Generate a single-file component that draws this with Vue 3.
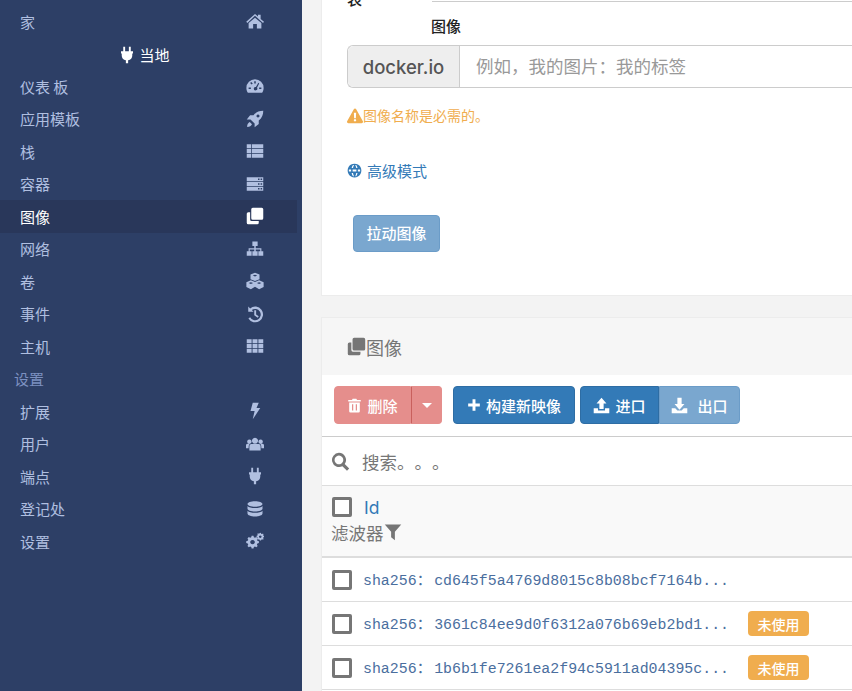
<script setup>
const icons = {
  home: 'M12 2.500l4 3.500V3.500h3.500v5.700l4.500 3.800-1.300 1.500L12 5.100 1.800 14.500.3 13zM12 7.500l8.500 7V22H14.500v-6h-5v6H3.500v-7.500z',
  gauge: 'M12 3A11.500 11.500 0 0 0 .5 14.500c0 2.500.7 4.500 2 6.500h19c1.300-2 2-4 2-6.500A11.500 11.500 0 0 0 12 3zM16.500 7.500l-3.300 5.800a2.300 2.300 0 1 0 1.500 1.100L17.600 8.500zM11 5.500h2v3h-2zM3.500 14h3v2h-3zM17.500 14h3v2h-3zM5.500 8L7 6.500l2 2L7.500 10z',
  rocket: 'M23 1c-5 0-9.500 1.500-13 6H5.500L1 12.500h5l5.500 5.500v5l5.500-4.500v-4.500c4.500-3.500 6-8 6-13zM16 6a2 2 0 1 0 .01 0zM5 16c-2 1-3.500 3-3.500 6.500 3.500 0 5.500-1.500 6.500-3.500z',
  list: 'M1 3h6v5.300H1zM8 3h15v5.300H8zM1 9.400h6v5.200H1zM8 9.400h15v5.200H8zM1 15.700h6V21H1zM8 15.700h15V21H8z',
  server: 'M1 3h22v5.300H1zM16 4.800v2h2v-2zM19.500 4.800v2h2v-2zM1 9.400h22v5.200H1zM16 11v2h2v-2zM19.500 11v2h2v-2zM1 15.700h22V21H1zM16 17.300v2h2v-2zM19.500 17.300v2h2v-2z',
  clone: 'M9 1h12a2 2 0 0 1 2 2v12a2 2 0 0 1-2 2H9a2 2 0 0 1-2-2V3a2 2 0 0 1 2-2zM5.500 7v9.500a2 2 0 0 0 2 2H17V21a2 2 0 0 1-2 2H3a2 2 0 0 1-2-2V9a2 2 0 0 1 2-2z',
  sitemap: 'M8.500 2h7v6H13v3h7.500v4H23v6h-6.500v-6H19v-2.500h-6V15h2.500v6h-7v-6H11v-2.500H5V15h2.500v6H1v-6h2.500v-4H11V8H8.500z',
  cubes: 'M12 1l6 2.400v6.100L12 12 6 9.500V3.400zM6.500 11l5.500 2.400v6.300L6.500 23 .5 20v-6.500zM17.500 11l6 2.500V20l-6 3-5.500-3.300v-6.300zM12 3.500l-3 1.200 3 1.200 3-1.200zM6.500 13.500l-3 1.200 3 1.300 3-1.300zM17.500 13.500l-3 1.200 3 1.300 3-1.300z',
  history: 'M3 2l2.500 2.500A10.500 10.500 0 1 1 3.200 18l2.300-1.800A7.500 7.500 0 1 0 7.700 6.700L10 9H3zM11 7h2.500v5.500l3.500 2.500-1.400 1.900L11 13.500z',
  th: 'M1 3h6.500v5.300H1zM8.700 3h6.600v5.300H8.700zM16.500 3H23v5.300h-6.500zM1 9.400h6.500v5.200H1zM8.700 9.400h6.600v5.200H8.700zM16.500 9.400H23v5.200h-6.500zM1 15.700h6.500V21H1zM8.700 15.700h6.600V21H8.700zM16.500 15.700H23V21h-6.500z',
  bolt: 'M9 1h8l-3 7h5L9 23l2.500-11H6z',
  users: 'M12 3.500a4 4 0 1 1-.01 0zM4.500 6a2.900 2.900 0 1 1-.01 0zM19.500 6a2.900 2.900 0 1 1-.01 0zM7 12h10c1.500 0 2.500 1.500 2.500 3.500V20.500h-15v-5C4.500 13.500 5.500 12 7 12zM0 17.500v-4C0 12 1.500 11.500 3 11.500h2C4 12.500 3.500 14 3.500 17.500zM24 17.500v-4c0-1.500-1.500-2-3-2h-2c1 1 1.500 2.500 1.500 6z',
  plug: 'M7 1h2.500v6H14.500V1H17v6h3v3h-1v3c0 3-2 5.500-5.500 6v4h-3v-4C7 18.500 5 16 5 13v-3H4V7h3z',
  db: 'M12 1.500c5.500 0 10 1.700 10 3.800S17.500 9 12 9 2 7.400 2 5.300s4.500-3.800 10-3.800zM2 8c1.500 1.800 5.500 2.700 10 2.700S20.500 9.800 22 8v3.500c0 2-4.500 3.700-10 3.700S2 13.500 2 11.500zM2 14.300c1.500 1.800 5.500 2.700 10 2.700s8.500-.9 10-2.700v3.700c0 2.200-4.500 4-10 4S2 20.200 2 18z',
  cogs: 'M7.500 5h2.500l.5 2 1.500.7 1.800-1 1.700 1.800-1 1.800.7 1.500 2 .5v2.500l-2 .5-.7 1.500 1 1.800-1.700 1.700-1.800-1-1.500.7-.5 2H7.500l-.5-2-1.500-.7-1.800 1L2 18.600l1-1.800-.7-1.500-2-.5v-2.500l2-.5.7-1.500-1-1.800L3.700 6.700l1.800 1 1.500-.7zM8.700 10.500a3 3 0 1 0 .01 0zM19 1l1 .2.400 1.300 1.300.2.800-.8 1 1-.8 1 .5 1.200h1v1.600l-1 .4-.3 1.200.7 1-1 1.100-1-.6-1.200.5-.4 1.100h-1.500l-.3-1.100-1.200-.5-1 .6-1-1.100.6-1-.4-1.200-1.100-.4V5l1.100-.3.500-1.200-.7-1 1-1 1 .8 1.200-.5zM19 4.500a1.700 1.700 0 1 0 .01 0z',
  globe: 'M12 1a11 11 0 1 0 .01 0zM9.500 3c-1.100 1.500-1.800 3-2.100 5h2.200c.3-2 .9-3.500 1.600-5zM13.200 3c.7 1.500 1.300 3 1.600 5h2c-.3-2-1-3.500-2-5zM3 13.500h3.600v-3H3zM9 13.500h6v-3H9zM17.400 13.500H21v-3h-3.600zM7.400 16c.3 2 1 3.500 2.100 5h1.700c-.7-1.500-1.300-3-1.600-5zM14.800 16c-.3 2-.9 3.500-1.600 5h1.600c1-1.500 1.700-3 2-5z',
  warning: 'M12 1.500c.8 0 1.400.4 1.800 1.100l10 18c.7 1.300-.2 2.900-1.800 2.900H2c-1.600 0-2.500-1.600-1.800-2.900l10-18c.4-.7 1-1.100 1.800-1.100zM10.300 8l.4 8h2.600l.4-8zM12 17.300a1.800 1.800 0 1 0 .01 0z',
  trash: 'M9 1h6l1 2h6v2.500H2V3h6zM3.500 7h17v14a2 2 0 0 1-2 2h-13a2 2 0 0 1-2-2zM8 10v10h2V10zM14 10v10h2V10z',
  plus: 'M9.500 2h5v7.500H22v5h-7.500V22h-5v-7.500H2v-5h7.500z',
  upload: 'M12 1l7 8h-4v8H9V9H5zM1 16h6v3h10v-3h6v7H1z',
  download: 'M9 1h6v9h4l-7 8-7-8h4zM1 16h5l3 3h6l3-3h5v7H1z',
  search: 'M10 1a9 9 0 0 1 7.300 14.200l5.700 5.700-2.800 2.800-5.800-5.700A9 9 0 1 1 10 1zM10 4.500a5.500 5.500 0 1 0 .01 0z',
  filter: 'M1 2h22l-8.500 9.500V23l-5-4v-7.500z',
}
const nav1 = [
  { t: '仪表 板', i: 'gauge' }, { t: '应用模板', i: 'rocket' }, { t: '栈', i: 'list' }, { t: '容器', i: 'server' },
  { t: '图像', i: 'clone', active: true }, { t: '网络', i: 'sitemap' }, { t: '卷', i: 'cubes' }, { t: '事件', i: 'history' }, { t: '主机', i: 'th' },
]
const nav2 = [
  { t: '扩展', i: 'bolt' }, { t: '用户', i: 'users' }, { t: '端点', i: 'plug' }, { t: '登记处', i: 'db' }, { t: '设置', i: 'cogs' },
]
const rows = [
  { id: 'cd645f5a4769d8015c8b08bcf7164b...', unused: false },
  { id: '3661c84ee9d0f6312a076b69eb2bd1...', unused: true },
  { id: '1b6b1fe7261ea2f94c5911ad04395c...', unused: true },
]
</script>

<template>
  <div class="page">
    <aside class="side">
      <div class="nav">
        <a class="row"><span>家</span><svg class="ico" viewBox="0 0 24 24"><path fill-rule="evenodd" :d="icons.home" /></svg></a>
        <div class="env"><svg viewBox="0 0 24 24"><path :d="icons.plug" /></svg><span>当地</span></div>
        <a v-for="n in nav1" :key="n.t" class="row" :class="{ active: n.active }">
          <span>{{ n.t }}</span><svg class="ico" viewBox="0 0 24 24"><path fill-rule="evenodd" :d="icons[n.i]" /></svg>
        </a>
        <div class="head">设置</div>
        <a v-for="n in nav2" :key="n.i" class="row">
          <span>{{ n.t }}</span><svg class="ico" viewBox="0 0 24 24"><path fill-rule="evenodd" :d="icons[n.i]" /></svg>
        </a>
      </div>
    </aside>
    <main class="main">
      <section class="card top">
        <div class="cut"><span class="cutlabel">表</span><div class="cutinput"></div></div>
        <div class="label">图像</div>
        <div class="group">
          <div class="addon">docker.io</div>
          <div class="field">例如，我的图片：我的标签</div>
        </div>
        <div class="warn"><svg viewBox="0 0 24 24"><path fill-rule="evenodd" :d="icons.warning" /></svg><span>图像名称是必需的。</span></div>
        <div class="adv"><svg viewBox="0 0 24 24"><path fill-rule="evenodd" :d="icons.globe" /></svg><span>高级模式</span></div>
        <button class="btn pull">拉动图像</button>
      </section>
      <section class="card list">
        <div class="title"><svg viewBox="0 0 24 24"><path fill-rule="evenodd" :d="icons.clone" /></svg><span>图像</span></div>
        <div class="tools">
          <div class="split">
            <button class="btn del"><svg viewBox="0 0 24 24"><path fill-rule="evenodd" :d="icons.trash" /></svg>删除</button>
            <button class="btn del caret"><i></i></button>
          </div>
          <button class="btn blue build"><svg viewBox="0 0 24 24"><path :d="icons.plus" /></svg>构建新映像</button>
          <div class="split io">
            <button class="btn blue imp"><svg viewBox="0 0 24 24"><path :d="icons.upload" /></svg>进口</button>
            <button class="btn blue off exp"><svg viewBox="0 0 24 24"><path :d="icons.download" /></svg>出口</button>
          </div>
        </div>
        <div class="search"><svg viewBox="0 0 24 24"><path fill-rule="evenodd" :d="icons.search" /></svg><span>搜索。。。</span></div>
        <div class="thead">
          <div class="idline"><span class="check"></span><span class="idt">Id</span></div>
          <div class="filter">滤波器<svg viewBox="0 0 24 24"><path :d="icons.filter" /></svg></div>
        </div>
        <div v-for="r in rows" :key="r.id" class="trow">
          <span class="check"></span>
          <span class="hash">sha256<span class="colon">：</span>{{ r.id }}</span>
          <span v-if="r.unused" class="badge">未使用</span>
        </div>
      </section>
    </main>
  </div>
</template>

<style>
html, body { margin: 0; height: 100%; overflow: hidden; background: #f3f3f3; }
</style>

<style scoped>
.page {
  display: flex;
  width: 852px;
  height: 691px;
  overflow: hidden;
  font-family: "Noto Sans CJK SC", "Open Sans", sans-serif;
  font-size: 15px;
  color: #333;
  text-spacing-trim: space-all;
}
.side { width: 302px; flex: none; background: #2d3f66; box-sizing: border-box; padding: 5px 5px 0 0; }
.row, .env, .head { display: flex; align-items: center; height: 32.500px; box-sizing: border-box; }
.row { justify-content: space-between; padding: 0 33px 0 20px; color: #b0bfe0; }
.row.active { background: #29375a; color: #fff; }
.ico { width: 18px; height: 18px; fill: #b0bfe0; }
.row.active .ico { fill: #fff; }
.env { justify-content: center; color: #fff; gap: 3px; padding: 2px 9px 0 0; }
.env svg { width: 18px; height: 20px; fill: #fff; }
.head { padding-left: 14px; color: #7c90c0; }
.main { flex: 1; min-width: 0; padding-left: 19px; }
.card { background: #fff; width: 560px; border: 1px solid #ececec; border-right: 0; box-sizing: border-box; }
.top { height: 306px; margin-top: -10px; margin-bottom: 21px; padding-left: 25px; }
.cut { display: flex; height: 11px; color: #222; font-weight: 500; }
.cutlabel { line-height: 16px; height: 16px; }
.cutinput { align-self: flex-end; margin-left: 70px; flex: 1; height: 1px; background: #ccc; }
.label { margin: 13px 0 0 84px; font-weight: 500; color: #222; line-height: 22px; height: 22px; }
.group { display: flex; height: 43px; margin-top: 8px; border: 1px solid #ccc; border-radius: 6px 0 0 6px; border-right: 0; box-sizing: border-box; }
.addon { width: 112px; flex: none; background: #eee; border-right: 1px solid #ccc; display: flex; align-items: center; justify-content: center; font-family: "Inter", sans-serif; font-size: 18.500px; font-weight: 500; color: #555; border-radius: 6px 0 0 6px; box-sizing: border-box; }
.field { padding-left: 16px; display: flex; align-items: center; font-size: 17.500px; color: #999; padding-bottom: 2px; }
.warn { display: flex; align-items: center; margin-top: 16px; height: 22px; font-size: 14px; color: #f0ad4e; }
.warn svg { width: 16px; height: 17px; fill: #f0ad4e; flex: none; }
.adv { display: flex; align-items: center; gap: 5px; margin-top: 32px; height: 24px; color: #337ab7; }
.adv svg { width: 15px; height: 15px; fill: #337ab7; }
.btn { border: 1px solid transparent; font: inherit; font-weight: 500; color: #fff; border-radius: 4px; height: 38px; padding: 0; display: inline-flex; align-items: center; justify-content: center; box-sizing: border-box; }
.btn svg { fill: #fff; flex: none; }
.pull { width: 87px; height: 37px; background: #7aa7cf; border-color: #6b9cc8; margin: 33px 0 0 6px; padding-bottom: 2px; }
.list { height: 420px; }
.title { height: 57px; background: #f6f6f6; display: flex; align-items: center; padding-left: 25px; font-size: 18px; color: #767676; }
.title svg { width: 19px; height: 19px; fill: #767676; }
.tools { display: flex; align-items: center; height: 62px; padding: 0 0 1px 12px; border-bottom: 1px solid #ccc; box-sizing: border-box; }
.split { display: flex; }
.del { background: #e58e8c; border-color: #e58e8c; width: 77px; border-radius: 4px 0 0 4px; gap: 5px; }
.del svg { width: 15px; height: 15px; }
.caret { width: 31px; border-radius: 0 4px 4px 0; border-left-color: #c9605d; }
.caret i { border-top: 5px solid #fff; border-left: 5px solid transparent; border-right: 5px solid transparent; }
.blue { background: #337ab7; border-color: #2e6da4; }
.build { width: 122px; margin-left: 11px; gap: 5px; }
.build svg { width: 14px; height: 14px; }
.io { margin-left: 5px; }
.imp { width: 79px; border-radius: 4px 0 0 4px; gap: 5px; }
.exp { width: 81px; border-radius: 0 4px 4px 0; gap: 9px; }
.imp svg, .exp svg { width: 17px; height: 17px; }
.off { background: #7aa7cf; border-color: #6b9cc8; }
.search { height: 49px; display: flex; align-items: center; padding-left: 9px; gap: 12px; border-bottom: 1px solid #ddd; box-sizing: border-box; font-size: 17.500px; color: #767676; }
.search svg { width: 19px; height: 19px; fill: #767676; }
.thead { height: 72px; background: #f9f9f9; border-bottom: 2px solid #ddd; box-sizing: border-box; padding: 10px 0 0 10px; }
.idline { display: flex; align-items: center; gap: 12px; height: 22px; }
.idt { font-family: "Inter", sans-serif; font-size: 17.500px; color: #337ab7; }
.check { width: 20px; height: 20px; flex: none; border: 3px solid #767676; border-radius: 2px; background: #fff; box-sizing: border-box; display: block; }
.filter { display: flex; align-items: center; height: 26px; margin: 1px 0 0 -1px; font-size: 17.500px; color: #767676; }
.filter svg { width: 18px; height: 18px; fill: #767676; }
.trow { display: flex; align-items: center; height: 44px; padding-left: 10px; border-bottom: 1px solid #ddd; box-sizing: border-box; }
.hash { margin: -2px 0 0 11px; font-family: "Liberation Mono", "Noto Sans CJK SC", monospace; font-size: 14.900px; color: #4a6e9e; }
.colon { display: inline-block; width: 17.500px; }
.badge { margin-left: 19px; width: 61px; height: 25px; background: #f0ad4e; color: #fff; border-radius: 4px; display: flex; align-items: center; justify-content: center; font-size: 14px; font-weight: 500; }
</style>
